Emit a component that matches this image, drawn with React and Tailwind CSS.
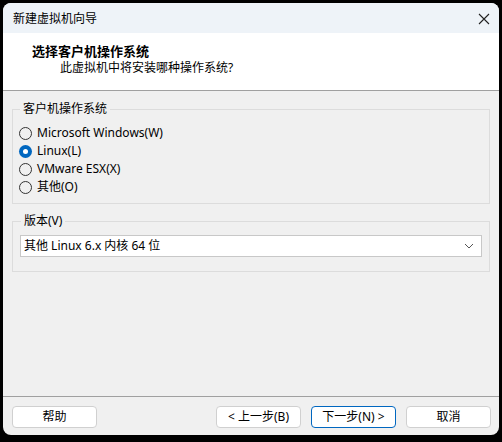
import React, { useState } from "react";

const font = {
  fontFamily: '"Segoe UI", "Noto Sans", "Noto Sans CJK SC", sans-serif',
};

function Radio({ checked, label, onClick }) {
  return (
    <div className="flex h-[18px] items-center gap-[5px]" onClick={onClick}>
      <span
        className={
          checked
            ? "flex h-[13px] w-[13px] items-center justify-center rounded-full bg-[#0067c0]"
            : "h-[13px] w-[13px] rounded-full border border-[#333333] bg-[#f0f0f0]"
        }
      >
        {checked && <span className="h-[5px] w-[5px] rounded-full bg-white" />}
      </span>
      <span className="text-[12px] leading-none text-black">{label}</span>
    </div>
  );
}

export default function App() {
  const [os, setOs] = useState("linux");

  const options = [
    { id: "win", label: "Microsoft Windows(W)" },
    { id: "linux", label: "Linux(L)" },
    { id: "esx", label: "VMware ESX(X)" },
    { id: "other", label: "其他(O)" },
  ];

  return (
    <div className="h-[442px] w-[502px] bg-black pl-[3px] pt-[3px]" style={font}>
      <div className="flex h-[432px] w-[496px] flex-col overflow-hidden rounded-[8px] bg-[#f0f0f0]">
        {/* Title bar */}
        <div className="flex h-[30px] shrink-0 items-center justify-between bg-[#eef3f8] pl-[10px] pr-[9px] pt-[1px]">
          <span className="text-[12px] text-black">新建虚拟机向导</span>
          <svg width="12" height="12" viewBox="0 0 12 12">
            <path d="M1 1 L11 11 M11 1 L1 11" stroke="#222" strokeWidth="1.1" />
          </svg>
        </div>

        {/* Header */}
        <div className="h-[58px] shrink-0 border-b border-[#a0a0a0] bg-white pl-[29px] pt-[10px]">
          <p className="text-[13px] font-bold leading-[17px] text-black">选择客户机操作系统</p>
          <p className="pl-[28px] text-[12px] leading-[16px] text-black">此虚拟机中将安装哪种操作系统?</p>
        </div>

        {/* Body */}
        <div className="flex flex-1 flex-col px-[9px] pt-[10px]">
          <fieldset className="h-[103px] rounded-none border border-[#dcdcdc] px-[6px] pb-0 pt-[7px]">
            <legend className="ml-[1px] px-[3px] text-[12px] leading-[16px] text-black">客户机操作系统</legend>
            <div className="flex flex-col">
              {options.map((o) => (
                <Radio
                  key={o.id}
                  label={o.label}
                  checked={os === o.id}
                  onClick={() => setOs(o.id)}
                />
              ))}
            </div>
          </fieldset>

          <fieldset className="mt-[9px] h-[59px] border border-[#dcdcdc] px-[7px] pt-[6px]">
            <legend className="ml-[1px] px-[3px] text-[12px] leading-[16px] text-black">版本(V)</legend>
            <div className="flex h-[22px] items-center justify-between border border-[#c8c8c8] bg-white pl-[3px] pr-[7px]">
              <span className="text-[12px] text-black">其他 Linux 6.x 内核 64 位</span>
              <svg width="10" height="6" viewBox="0 0 10 6">
                <path d="M1 1 L5 5 L9 1" stroke="#555" strokeWidth="1" fill="none" />
              </svg>
            </div>
          </fieldset>

          <div className="flex-1" />

          {/* Footer */}
          <div className="-mx-[9px] border-t border-[#a0a0a0] pb-[7px] pl-[9px] pr-[8px] pt-[9px]">
            <div className="flex items-center">
              <button className="h-[22px] w-[85px] rounded-[4px] border border-[#d0d0d0] bg-white text-[12px] text-black">
                帮助
              </button>
              <div className="flex-1" />
              <button className="h-[22px] w-[85px] rounded-[4px] border border-[#d0d0d0] bg-white text-[12px] text-black">
                &lt; 上一步(B)
              </button>
              <button className="ml-[10px] h-[22px] w-[85px] rounded-[4px] border border-[#0067c0] bg-white text-[12px] text-black">
                下一步(N) &gt;
              </button>
              <button className="ml-[10px] h-[22px] w-[85px] rounded-[4px] border border-[#d0d0d0] bg-white text-[12px] text-black">
                取消
              </button>
            </div>
          </div>
        </div>
      </div>
    </div>
  );
}
